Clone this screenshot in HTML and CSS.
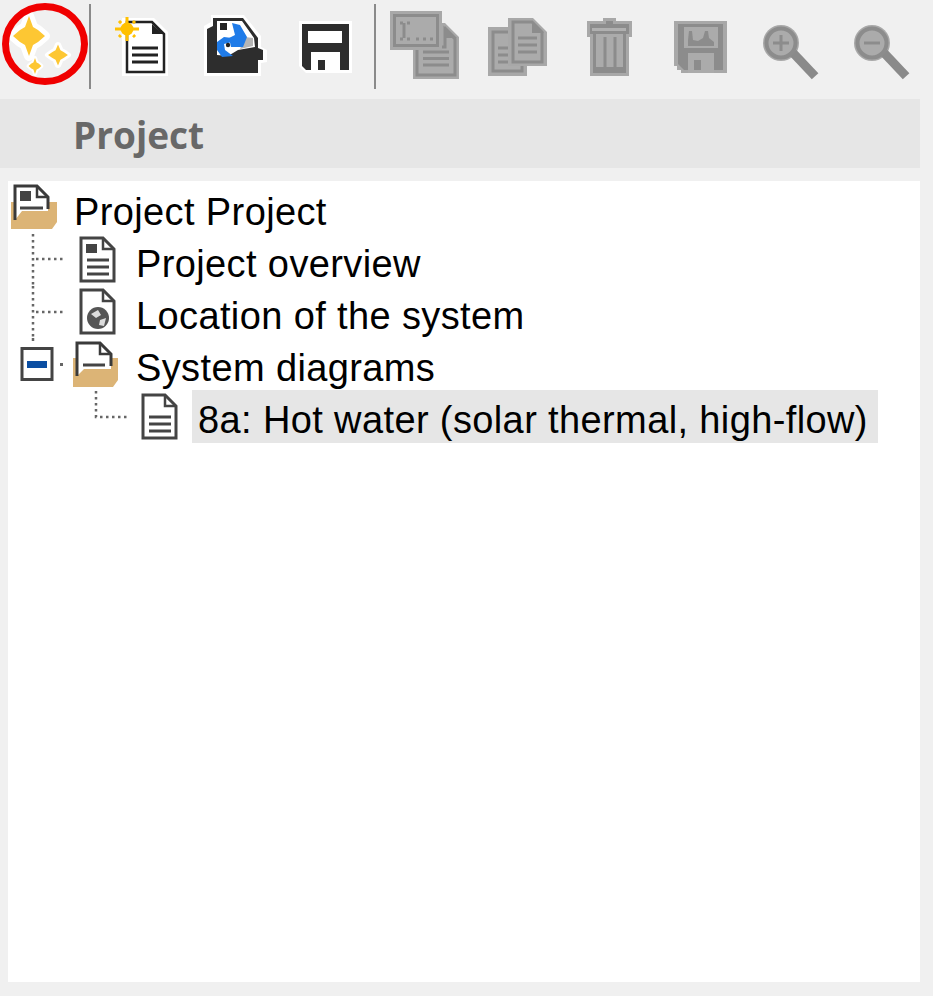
FILE: index.html
```html
<!DOCTYPE html>
<html lang="en">
<head>
<meta charset="utf-8">
<title>Project</title>
<link rel="stylesheet" href="styles.css">
</head>
<body>
<div class="toolbar">
  <svg class="toolstrip" width="933" height="99" viewBox="0 0 933 99">
    <defs>
      <path id="spark" d="M0-20 L4-9 L9-6 L16 0 L9 6 L4 9 L0 20 L-4 9 L-9 6 L-16 0 L-9-6 L-4-9Z"/>
    </defs>
    <!-- sparkle button -->
    <g fill="#fff" stroke="#fff" stroke-width="10" stroke-linejoin="round">
      <use href="#spark" transform="translate(29 36)"/>
      <use href="#spark" transform="translate(58 55) scale(.62 .52)"/>
      <use href="#spark" transform="translate(35 66) scale(.4)"/>
    </g>
    <g fill="#fdc733">
      <use href="#spark" transform="translate(29 36)"/>
      <use href="#spark" transform="translate(58 55) scale(.62 .52)"/>
      <use href="#spark" transform="translate(35 66) scale(.4)"/>
    </g>
    <ellipse cx="45" cy="44" rx="39.5" ry="37.5" fill="none" stroke="#f00000" stroke-width="7"/>
    <rect x="89" y="4" width="2" height="85" fill="#8a8a8a"/>
    <rect x="374" y="4" width="2" height="85" fill="#8a8a8a"/>
    <!-- new -->
    <path d="M122 18H154L168 32V76H122Z" fill="#fff"/>
    <path d="M127 22H152L164 34V72H127Z" fill="#fff" stroke="#222" stroke-width="2.5"/>
    <path d="M152 24V34H163Z" fill="#222"/>
    <path d="M132 48H158M132 55H158M132 62H158" stroke="#222" stroke-width="3"/>
    <path d="M115 29H139M127 17V41" stroke="#ffc000" stroke-width="3"/>
    <path d="M119 21L135 37M135 21L119 37" stroke="#ffc000" stroke-width="3" stroke-dasharray="3 4 9 4 3"/>
    <circle cx="127" cy="29" r="6.5" fill="#ffc000"/>
    <!-- open -->
    <path d="M204 76V26L211 22V15H244L261 36V47L267 50V62L261 63V76Z" fill="#fff"/>
    <path d="M207 73V29L213 26V18H243L258 38V48L263 50V60L258 60V73Z" fill="#2d2d2d"/>
    <path d="M217 21H242L254 38L255 47L238 50L228 56L217 55Z" fill="#fff"/>
    <rect x="220" y="23" width="7" height="7" fill="#222"/>
    <path d="M245 37L253 38L253 46L240 49Z" fill="#b5b5b5"/>
    <path d="M232 23L240 25L247 37L243 47L231 47L229 38L235 35Z" fill="#1f7be8"/>
    <path d="M217 42L224 37L232 38L232 42L224 44L225 50L233 56L222 57L217 50Z" fill="#1f7be8"/>
    <circle cx="228" cy="45" r="2.2" fill="#222"/>
    <!-- save -->
    <path d="M299 21H352V73H306L299 66Z" fill="#fff"/>
    <path d="M302 24H349V70H340V52H311V70H306L302 66Z" fill="#2d2d2d"/>
    <rect x="308" y="31" width="34" height="12" fill="#fff"/>
    <rect x="318" y="60" width="7" height="10" fill="#2d2d2d"/>
    <!-- disabled: text to document -->
    <path d="M413 40H442V23H445L459 37V79H413Z" fill="#a8a8a8"/>
    <path d="M417 47H445V29L455 39V75H417Z" fill="#ababab" stroke="#8c8c8c" stroke-width="3"/>
    <path d="M445 26L457 38H445Z" fill="#8c8c8c"/>
    <path d="M423 52H449M423 58.500H449M423 65H449" stroke="#8c8c8c" stroke-width="3"/>
    <rect x="390" y="11" width="52" height="39" fill="#a8a8a8"/>
    <rect x="394.500" y="15.500" width="43" height="30" fill="#ababab" stroke="#8c8c8c" stroke-width="3"/>
    <path d="M400 23H410M400 39H410" stroke="#8c8c8c" stroke-width="3" stroke-dasharray="3 4"/>
    <path d="M404 23V38" stroke="#8c8c8c" stroke-width="3"/>
    <path d="M416 39H433" stroke="#8c8c8c" stroke-width="3" stroke-dasharray="3 4"/>
    <!-- copy -->
    <rect x="488" y="27" width="39" height="49" fill="#a8a8a8"/>
    <rect x="493" y="32" width="29" height="39" fill="#ababab" stroke="#8c8c8c" stroke-width="3"/>
    <path d="M498 48H512M498 55H512M498 62H523" stroke="#8c8c8c" stroke-width="3"/>
    <path d="M508 18H533L547 32V66H508Z" fill="#a8a8a8"/>
    <path d="M513 22H532L542 32V62H513Z" fill="#ababab" stroke="#8c8c8c" stroke-width="3"/>
    <path d="M532 21L544 33H532Z" fill="#8c8c8c"/>
    <path d="M518 38H537M518 45H537M518 52H537" stroke="#8c8c8c" stroke-width="3"/>
    <!-- delete -->
    <path d="M603 18H616V21H632V37H629V76H590V37H587V21H603Z" fill="#a8a8a8"/>
    <path d="M606 21H613V24H629V34H626V73H593V34H590V24H606Z" fill="#8c8c8c"/>
    <rect x="592" y="28" width="34" height="3" fill="#b0b0b0"/>
    <rect x="596" y="34" width="27" height="33" fill="#ababab"/>
    <path d="M605 37V67M615 37V67" stroke="#8c8c8c" stroke-width="3"/>
    <!-- floppy chart -->
    <path d="M674 21H727V73H681V70H677V66H674Z" fill="#a8a8a8"/>
    <path d="M678 24H723V70H684L678 64Z" fill="#8c8c8c"/>
    <rect x="684" y="27" width="34" height="21" fill="#ababab"/>
    <path d="M689 31H692L693 40L698 41L703 38L705 31H708L709 38L714 42V46H688V40Z" fill="#8c8c8c"/>
    <rect x="688" y="53" width="26" height="20" fill="#ababab"/>
    <rect x="694" y="60" width="7" height="10" fill="#8c8c8c"/>
    <!-- zoom -->
    <circle cx="781" cy="43" r="18" fill="#a8a8a8"/>
    <path d="M796 56L812 73" stroke="#8a8a8a" stroke-width="9" stroke-linecap="square"/>
    <circle cx="781" cy="43" r="14.500" fill="#ababab" stroke="#8c8c8c" stroke-width="4"/>
    <path d="M773 43H789M781 35V51" stroke="#8c8c8c" stroke-width="3"/>
    <circle cx="872" cy="43" r="18" fill="#a8a8a8"/>
    <path d="M887 56L903 73" stroke="#8a8a8a" stroke-width="9" stroke-linecap="square"/>
    <circle cx="872" cy="43" r="14.500" fill="#ababab" stroke="#8c8c8c" stroke-width="4"/>
    <path d="M864 43H880" stroke="#8c8c8c" stroke-width="3"/>
  </svg>
</div>
<div class="panel-head">Project</div>
<div class="tree">
  <div class="row">
    <svg class="lead" width="64" height="52" viewBox="8 182 64 52">
      <path d="M11 202H49V202H57V222L52 229H11Z" fill="#dcb476"/>
      <path d="M15 220V186H38L48 196V211H22" fill="#fff"/>
      <path d="M15 220V186H37L48 197V209" fill="none" stroke="#3a3a3a" stroke-width="3"/>
      <path d="M37 186V197H48" fill="none" stroke="#3a3a3a" stroke-width="2.500"/>
      <rect x="20" y="191" width="11" height="10" fill="#444"/>
      <path d="M20 208H43" stroke="#444" stroke-width="3"/>
    </svg>
    <span class="label">Project Project</span>
  </div>
  <div class="row">
    <svg class="lead" width="126" height="52" viewBox="8 234 126 52">
      <path d="M33 234V286M36 259H63" stroke="#666" stroke-width="2.5" stroke-dasharray="2.5 3.5" fill="none"/>
      <path d="M81 238H103L114 249V281H81Z" fill="#fff" stroke="#444" stroke-width="3"/>
      <path d="M103 238V249H114" fill="none" stroke="#444" stroke-width="2.500"/>
      <rect x="86" y="244" width="11" height="9" fill="#444"/>
      <path d="M87 260H109M87 267H109M87 274H109" stroke="#444" stroke-width="3"/>
    </svg>
    <span class="label">Project overview</span>
  </div>
  <div class="row">
    <svg class="lead" width="126" height="52" viewBox="8 286 126 52">
      <path d="M33 286V338M36 312H63" stroke="#666" stroke-width="2.5" stroke-dasharray="2.5 3.5" fill="none"/>
      <path d="M81 290H103L114 301V333H81Z" fill="#fff" stroke="#444" stroke-width="3"/>
      <path d="M103 290V301H114" fill="none" stroke="#444" stroke-width="2.500"/>
      <circle cx="98" cy="318" r="11" fill="#555"/>
      <path d="M91 314L98 310L101 315L96 318ZM100 320L106 318L104 326L99 325Z" fill="#ddd"/>
    </svg>
    <span class="label">Location of the system</span>
  </div>
  <div class="row">
    <svg class="lead" width="126" height="52" viewBox="8 338 126 52">
      <path d="M33 338V341" stroke="#666" stroke-width="2.5"/>
      <rect x="22" y="348.500" width="30" height="31" fill="#fff" stroke="#444" stroke-width="3"/>
      <rect x="27" y="361" width="20" height="7" fill="#0b4ea2"/>
      <rect x="60" y="363" width="3" height="3" fill="#666"/>
      <path d="M73 358H113V358H118V380L113 387H73Z" fill="#dcb476"/>
      <path d="M77 376V343H100L111 354V369H84" fill="#fff"/>
      <path d="M77 376V343H100L111 354V366" fill="none" stroke="#3a3a3a" stroke-width="3"/>
      <path d="M100 343V354H111" fill="none" stroke="#3a3a3a" stroke-width="2.500"/>
      <path d="M83 365H105" stroke="#444" stroke-width="3"/>
    </svg>
    <span class="label">System diagrams</span>
  </div>
  <div class="row">
    <svg class="lead" width="184" height="52" viewBox="8 390 184 52">
      <path d="M96 391V417H128" stroke="#666" stroke-width="2.5" stroke-dasharray="2.5 3.5" fill="none"/>
      <path d="M143 395H165L176 406V438H143Z" fill="#fff" stroke="#444" stroke-width="3"/>
      <path d="M165 395V406H176" fill="none" stroke="#444" stroke-width="2.500"/>
      <path d="M149 417H171M149 424H171M149 431H171" stroke="#444" stroke-width="3"/>
    </svg>
    <span class="label selected">8a: Hot water (solar thermal, high-flow)</span>
  </div>
</div>
</body>
</html>
```
FILE: styles.css
```css
* { box-sizing: border-box; }
html, body { margin: 0; padding: 0; }
body {
  width: 933px;
  height: 996px;
  overflow: hidden;
  background: #f0f0f0;
  font-family: "Liberation Sans", Arial, sans-serif;
}
.toolbar { height: 99px; }
.toolstrip, .lead { display: block; flex: none; }
.toolstrip { filter: blur(0.5px); }
.lead { filter: blur(0.3px); }
.panel-head {
  width: 920px;
  height: 69px;
  background: #e6e6e6;
  padding-left: 73px;
  font-family: "Open Sans", sans-serif;
  font-weight: 700;
  font-size: 37px;
  line-height: 72px;
  color: #686868;
}
.tree {
  width: 912px;
  height: 801px;
  margin: 13px 0 0 8px;
  padding-top: 1px;
  background: #fff;
}
.row {
  display: flex;
  align-items: flex-start;
  height: 52px;
}
.label {
  height: 53px;
  padding: 0 6px 0 2px;
  font-size: 38px;
  letter-spacing: 0.38px;
  line-height: 60px;
  color: #000;
  white-space: nowrap;
}
.selected {
  background: #e6e6e6;
  padding: 0 10px 0 6px;
}
```
